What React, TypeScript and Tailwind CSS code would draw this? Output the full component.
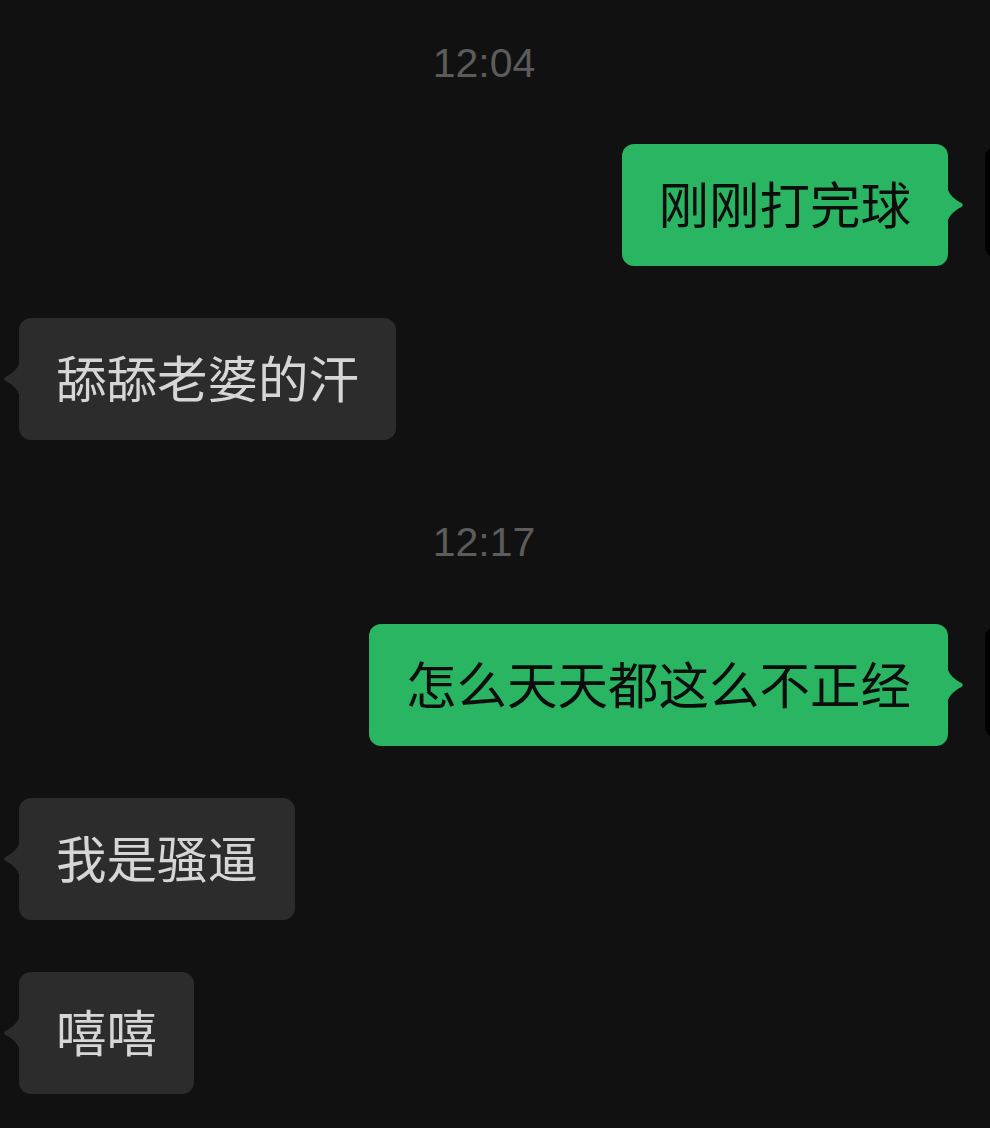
import React from "react";

const cjk = { fontFamily: '"Noto Sans CJK SC", "Noto Sans", sans-serif' };

function Time({ t, mt }: { t: string; mt: string }) {
  return (
    <div className={`${mt} flex justify-center pr-[22px]`}>
      <span
        className="text-[41px] leading-[41px] text-[#5c5c5c]"
        style={{ fontFamily: '"Liberation Sans", Arial, sans-serif' }}
      >
        {t}
      </span>
    </div>
  );
}

function Sent({ text, mt }: { text: string; mt: string }) {
  return (
    <div className={`${mt} flex justify-end items-start mr-[-105px]`}>
      <div className="relative h-[122px] rounded-[12px] bg-[#29b561] px-[37px] pb-[5px] flex items-center">
        <span className="text-[50.5px] leading-none text-[#0d0d0d] whitespace-nowrap" style={cjk}>
          {text}
        </span>
        <svg
          className="absolute top-1/2 -translate-y-1/2 left-[calc(100%-1px)]"
          width="17"
          height="36"
          viewBox="0 0 17 36"
        >
          <path
            d="M0 0 C2 8 8 12.5 14.5 16 Q17 18 14.5 20 C8 23.5 2 28 0 36 Z"
            fill="#29b561"
          />
        </svg>
      </div>
      <div className="ml-[37px] mt-[3px] w-[110px] h-[110px] rounded-[10px] bg-black shrink-0" />
    </div>
  );
}

function Recv({ text, mt }: { text: string; mt: string }) {
  return (
    <div className={`${mt} flex justify-start`}>
      <div className="relative ml-[19px] h-[122px] rounded-[12px] bg-[#2c2c2c] px-[37px] pb-[5px] flex items-center">
        <span className="text-[50.5px] leading-none text-[#d6d6d6] whitespace-nowrap" style={cjk}>
          {text}
        </span>
        <svg
          className="absolute top-1/2 -translate-y-1/2 right-[calc(100%-1px)]"
          width="17"
          height="36"
          viewBox="0 0 17 36"
        >
          <path
            d="M17 0 C15 8 9 12.5 2.5 16 Q0 18 2.5 20 C9 23.5 15 28 17 36 Z"
            fill="#2c2c2c"
          />
        </svg>
      </div>
    </div>
  );
}

export default function App() {
  return (
    <div className="w-[990px] h-[1128px] bg-[#111111] overflow-hidden flex flex-col">
      <Time t="12:04" mt="mt-[43px]" />
      <Sent text="刚刚打完球" mt="mt-[60px]" />
      <Recv text="舔舔老婆的汗" mt="mt-[52px]" />
      <Time t="12:17" mt="mt-[82px]" />
      <Sent text="怎么天天都这么不正经" mt="mt-[61px]" />
      <Recv text="我是骚逼" mt="mt-[52px]" />
      <Recv text="嘻嘻" mt="mt-[52px]" />
    </div>
  );
}
